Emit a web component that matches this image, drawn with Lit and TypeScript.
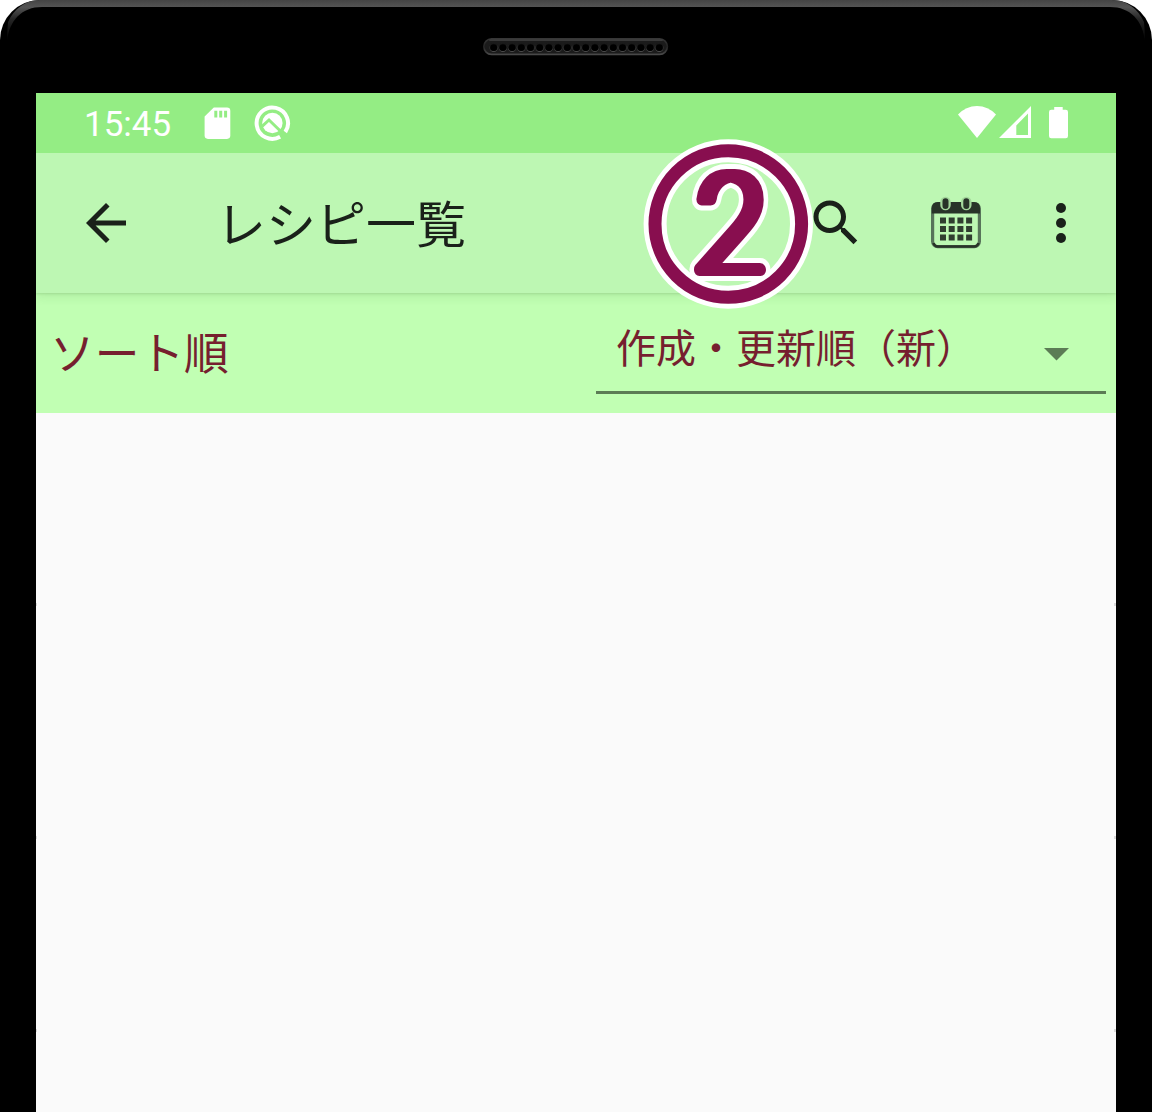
import { LitElement, html, css, svg } from "lit";
import { customElement } from "lit/decorators.js";

const range = (n: number) => Array.from({ length: n }, (_, i) => i);

@customElement("phone-speaker")
class PhoneSpeaker extends LitElement {
  static styles = css`
    :host { display: block; width: 186px; height: 18px; }
    .grille { display: block; }
  `;
  render() {
    return html`<svg class="grille" width="186" height="18" viewBox="0 0 186 18">
      <defs>
        <linearGradient id="rim" x1="0" y1="0" x2="0" y2="1">
          <stop offset="0" stop-color="#363636" /><stop offset=".5" stop-color="#242424" /><stop offset="1" stop-color="#484848" />
        </linearGradient>
      </defs>
      <rect x=".8" y=".8" width="183.600" height="15.600" rx="7.800" fill="#1b1b1b" stroke="url(#rim)" stroke-width="1.600" />
      <rect x="6" y="1" width="174" height="2" rx="1" fill="#3a3a3a" />
      ${range(19).map((i) => svg`<circle cx=${10.7 + i * 9.2} cy="9.8" r="4.2" fill="#4c4c4c"/><circle cx=${10.7 + i * 9.2} cy="9" r="4.1" fill="#181818"/><circle cx=${10.7 + i * 9.2} cy="9.6" r="3.4" fill="#000"/>`)}
    </svg>`;
  }
}

@customElement("status-bar")
class StatusBar extends LitElement {
  static styles = css`
    :host { display: flex; height: 60px; box-sizing: border-box; align-items: center; padding: 0 48px 0 48px; background: #94ed84; color: #fff; }
    .time { font: 400 35px/60px Roboto, sans-serif; width: 120px; padding-top: 3px; }
    .icons { display: block; }
    .space { flex: 1; }
  `;
  render() {
    return html`<span class="time">15:45</span>
      <svg class="icons" width="88" height="60" viewBox="204 93 88 60">
        <path fill="#fff" d="M213.800 107.500H227Q230.300 107.500 230.300 110.800V135.600Q230.300 138.900 227 138.900H208Q204.600 138.900 204.600 135.600V116.500Z" />
        <path fill="#94ed84" d="M214.300 110.700h3v6.800h-3zM219.200 110.700h3v6.800h-3zM224.100 110.700h3v6.800h-3z" />
        <path d="M280.100 136.800A15.700 15.700 0 1 1 285.300 132" fill="none" stroke="#fff" stroke-width="4" />
        <circle cx="272.400" cy="123" r="10.200" fill="#fff" />
        <path d="M261.500 126.800L269 120L286 136.500" fill="none" stroke="#94ed84" stroke-width="3" />
      </svg>
      <span class="space"></span>
      <svg class="icons" width="111" height="60" viewBox="957 93 111 60">
        <path fill="#fff" d="M958 114.500Q966 106 977 106T996 114.500L977 138Z" />
        <path fill="#fff" fill-rule="evenodd" d="M999 138L1031 106V138ZM1016.300 125.500V135H1028V113.600Z" />
        <path fill="#fff" d="M1054.200 107H1062.700V109.700H1065.800Q1068 109.700 1068 112V136Q1068 138.200 1065.800 138.200H1051.300Q1049 138.200 1049 136V112Q1049 109.700 1051.300 109.700H1054.200Z" />
      </svg>`;
  }
}

@customElement("app-bar")
class AppBar extends LitElement {
  static styles = css`
    :host { position: relative; display: flex; align-items: center; height: 140px; box-sizing: border-box; padding: 0 25px 0 40px; background: #bdf7b3; box-shadow: 0 1px 2px rgba(40, 90, 30, .14), 0 4px 9px rgba(40, 90, 30, .1); clip-path: inset(0 0 -20px 0); }
    .icon { display: block; flex: none; fill: #1a211a; }
    .title { flex: 1; margin: 0 0 0 80px; padding-bottom: 5px; font: 400 50px/72px "Noto Sans CJK JP", sans-serif; color: #1a211a; white-space: nowrap; }
    .actions { display: flex; gap: 60px; align-items: center; }
    .last { margin-left: -15px; }
  `;
  render() {
    return html`<svg class="icon" width="60" height="60" viewBox="0 0 24 24"><path d="M20 11H7.830l5.590-5.590L12 4l-8 8 8 8 1.410-1.410L7.830 13H20v-2z" /></svg>
      <h1 class="title">レシピ一覧</h1>
      <div class="actions">
        <svg class="icon" width="60" height="60" viewBox="0 0 24 24"><path d="M15.500 14h-.790l-.280-.270C15.410 12.590 16 11.110 16 9.500 16 5.910 13.090 3 9.500 3S3 5.910 3 9.500 5.910 16 9.500 16c1.610 0 3.090-.590 4.230-1.570l.270.280v.790l5 4.990L20.490 19l-4.990-5zm-6 0C7.010 14 5 11.990 5 9.500S7.010 5 9.500 5 14 7.010 14 9.500 11.990 14 9.500 14z" /></svg>
        <svg class="icon" width="60" height="60" viewBox="926 193 60 60">
          <rect x="932.600" y="203.600" width="46.800" height="43" rx="5" fill="none" stroke="#58745a" stroke-width="3.200" />
          <path d="M933.500 243Q934.500 246.500 938 246.500H974Q977.500 246.500 978.500 243" fill="none" stroke="#283328" stroke-width="2.600" />
          <path fill="#283328" d="M931.800 213.500V208Q931.800 202 938 202H974Q980 202 980 208V213.500Z" />
          <path stroke="#a3d69b" stroke-width="10.500" stroke-linecap="round" d="M945.500 202V205M966.300 202V205" />
          <path stroke="#283328" stroke-width="6" stroke-linecap="round" d="M945.500 201.300V206M966.300 201.300V206" />
          ${range(12).map((i) => svg`<rect x=${940 + (i % 4) * 8.7} y=${217.5 + Math.floor(i / 4) * 8.5} width="6" height="6" fill="#303e30"/>`)}
        </svg>
        <svg class="icon last" width="60" height="60" viewBox="0 0 24 24"><circle cx="12" cy="6" r="2" /><circle cx="12" cy="12" r="2" /><circle cx="12" cy="18" r="2" /></svg>
      </div>`;
  }
}

@customElement("sort-bar")
class SortBar extends LitElement {
  static styles = css`
    :host { display: flex; justify-content: space-between; height: 120px; box-sizing: border-box; padding: 0 10px 0 14px; background: #c1ffb3; color: #761f2f; font-family: "Noto Sans CJK JP", sans-serif; white-space: nowrap; }
    .label { font-size: 44.700px; line-height: 116px; }
    .select { display: flex; justify-content: space-between; align-items: center; width: 510px; height: 101px; box-sizing: border-box; border-bottom: 3px solid #5c7c55; padding: 7px 37px 0 20px; font-size: 40px; line-height: 60px; }
    .caret { display: block; margin-top: 18px; fill: #5c7c55; }
  `;
  render() {
    return html`<span class="label">ソート順</span>
      <div class="select"><span>作成・更新順（新）</span>
        <svg class="caret" width="25" height="13" viewBox="0 0 25 13"><path d="M0 0H25L12.500 12.500Z" /></svg></div>`;
  }
}

@customElement("step-marker")
class StepMarker extends LitElement {
  static styles = css`
    :host { display: block; }
    .mark { display: block; overflow: visible; }
    .digit { font: 100 135px Lato, sans-serif; text-anchor: middle; stroke-linejoin: round; }
    .halo { fill: #fff; stroke: #fff; stroke-width: 22px; }
    .ink { fill: #880e4f; stroke: #880e4f; stroke-width: 12px; }
  `;
  render() {
    return html`<svg class="mark" width="172" height="172" viewBox="642 138 172 172">
      <filter id="widen" filterUnits="userSpaceOnUse" x="642" y="138" width="172" height="172" color-interpolation-filters="sRGB"><feMorphology operator="dilate" radius="4 0" /></filter>
      <circle cx="728.300" cy="224" r="73.200" fill="none" stroke="#fff" stroke-width="23" />
      <g filter="url(#widen)"><text class="digit halo" transform="translate(730.500 271) scale(.9 1)">2</text></g>
      <circle cx="728.300" cy="224" r="73.300" fill="none" stroke="#880e4f" stroke-width="13" />
      <g filter="url(#widen)"><text class="digit ink" transform="translate(730.500 271) scale(.9 1)">2</text></g>
    </svg>`;
  }
}

@customElement("app-root")
class AppRoot extends LitElement {
  static styles = css`
    :host { display: block; width: 1152px; height: 1112px; background: #fff; overflow: hidden; }
    .device { position: relative; display: flex; flex-direction: column; height: 1112px; box-sizing: border-box; padding: 0 36px; background: #000; border-radius: 40px 40px 0 0; }
    .rim { position: absolute; left: 0; top: 0; }
    .top { display: flex; justify-content: center; height: 93px; box-sizing: border-box; padding-top: 38px; }
    .screen {
      --tick: linear-gradient(#dadada, #dadada);
      flex: 1;
      background: var(--tick) 0 510px / 1px 3px, var(--tick) 100% 510px / 2px 3px, var(--tick) 0 743px / 1px 3px, var(--tick) 100% 743px / 2px 3px, var(--tick) 0 936px / 1px 3px, var(--tick) 100% 936px / 2px 3px, #fafafa;
      background-repeat: no-repeat;
    }
    .step { position: absolute; z-index: 2; left: 642px; top: 138px; }
  `;
  render() {
    return html`<div class="device">
      <svg class="rim" width="1152" height="50" viewBox="0 0 1152 50">
        <defs>
          <linearGradient id="edge" gradientUnits="userSpaceOnUse" x1="0" y1="0" x2="0" y2="42">
            <stop offset="0" stop-color="#444" /><stop offset=".17" stop-color="#545454" /><stop offset=".45" stop-color="#262626" /><stop offset="1" stop-color="#000" />
          </linearGradient>
        </defs>
        <path fill="url(#edge)" d="M8 22C14 9 25 0 40 0H1112C1127 0 1138 9 1144 22Q1145 32 1145 42C1143 20 1130 7 1110 7H42C22 7 9 20 7 42Q7 32 8 22Z" />
      </svg>
      <div class="top"><phone-speaker></phone-speaker></div>
      <main class="screen"><status-bar></status-bar><app-bar></app-bar><sort-bar></sort-bar></main>
      <step-marker class="step"></step-marker>
    </div>`;
  }
}
